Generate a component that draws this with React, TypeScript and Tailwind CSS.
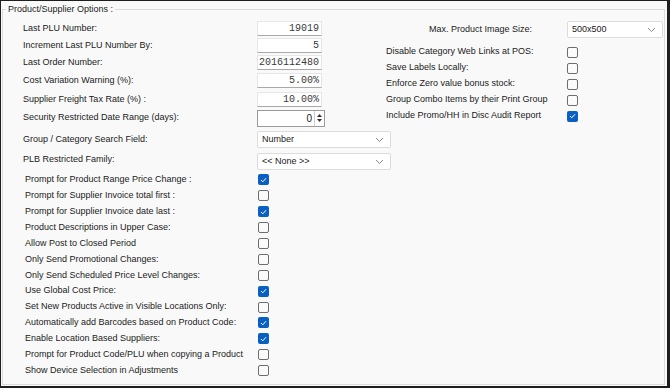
import React from 'react';

const font = "font-['Liberation_Sans',Arial,sans-serif]";

function Chevron() {
  return (
    <svg width="9" height="6" viewBox="0 0 9 6" className="shrink-0">
      <polyline points="1,1 4.5,4.5 8,1" fill="none" stroke="#8a8a8a" strokeWidth="1" />
    </svg>
  );
}

function Check({ checked }: { checked?: boolean }) {
  if (checked) {
    return (
      <div className="w-[11px] h-[11px] rounded-[2px] bg-[#0a5fc2] flex items-center justify-center">
        <svg width="7" height="6" viewBox="0 0 7 6">
          <polyline points="1,3 2.8,4.8 6,1.2" fill="none" stroke="#ffffff" strokeWidth="1" />
        </svg>
      </div>
    );
  }
  return <div className="w-[11px] h-[11px] rounded-[2px] border border-[#6e6e6e] bg-[#fbfbfb]" />;
}

function NumInput({ value }: { value: string }) {
  return (
    <div className="w-[65px] h-[15px] bg-white border border-[#e6e6e6] border-b-[#a9a9a9] flex items-center justify-end pr-[2px] font-['Liberation_Mono',monospace] text-[10px] text-[#3a3a3a]">
      {value}
    </div>
  );
}

function Select({ value, w }: { value: string; w: string }) {
  return (
    <div className={`${w} h-[17px] bg-white border border-[#dcdcdc] rounded-[2px] flex items-center justify-between pl-[4px] pr-[6px] text-[9px] text-[#1a1a1a] whitespace-nowrap`}>
      <span>{value}</span>
      <Chevron />
    </div>
  );
}

const topRows = [
  { label: 'Last PLU Number:', value: '19019', cls: 'h-[17px]' },
  { label: 'Increment Last PLU Number By:', value: '5', cls: 'h-[17px]' },
  { label: 'Last Order Number:', value: '2016112480', cls: 'h-[17px]' },
  { label: 'Cost Variation Warning (%):', value: '5.00%', cls: 'h-[17px] mt-[1px]' },
  { label: 'Supplier Freight Tax Rate (%) :', value: '10.00%', cls: 'h-[17px] mt-[2px]' },
];

const rightChecks = [
  { label: 'Disable Category Web Links at POS:', checked: false },
  { label: 'Save Labels Locally:', checked: false },
  { label: 'Enforce Zero value bonus stock:', checked: false },
  { label: 'Group Combo Items by their Print Group', checked: false },
  { label: 'Include Promo/HH in Disc Audit Report', checked: true },
];

const leftChecks = [
  { label: 'Prompt for Product Range Price Change :', checked: true },
  { label: 'Prompt for Supplier Invoice total first :', checked: false },
  { label: 'Prompt for Supplier Invoice date last :', checked: true },
  { label: 'Product Descriptions in Upper Case:', checked: false },
  { label: 'Allow Post to Closed Period', checked: false },
  { label: 'Only Send Promotional Changes:', checked: false },
  { label: 'Only Send Scheduled Price Level Changes:', checked: false },
  { label: 'Use Global Cost Price:', checked: true },
  { label: 'Set New Products Active in Visible Locations Only:', checked: false },
  { label: 'Automatically add Barcodes based on Product Code:', checked: true },
  { label: 'Enable Location Based Suppliers:', checked: true },
  { label: 'Prompt for Product Code/PLU when copying a Product', checked: false },
  { label: 'Show Device Selection in Adjustments', checked: false },
];

export default function App() {
  return (
    <div className={`w-[670px] h-[388px] bg-[#f9f9f9] border-l border-t border-r-[3px] border-b-[2px] border-[#1e1e1e] ${font} text-[9px] text-[#1a1a1a] whitespace-nowrap overflow-hidden`}>
      <div className="relative ml-[1px] mt-[8px] w-[663px] h-[376px] border border-[#dcdcdc]">
        {/* group box title sits on the border */}
        <span className="absolute left-[3px] top-[-7px] px-[2px] bg-[#f9f9f9] leading-[12px]">
          Product/Supplier Options :
        </span>

        <div className="pt-[10px] pl-[20px] flex flex-col">
          {/* Top section: numeric fields + right options */}
          <div className="flex">
            <div className="w-[305px] flex flex-col">
              {topRows.map((r) => (
                <div key={r.label} className={`${r.cls} flex items-center`}>
                  <span className="w-[234px]">{r.label}</span>
                  <NumInput value={r.value} />
                </div>
              ))}
              <div className="h-[18px] mt-[1px] flex items-center">
                <span className="w-[234px]">Security Restricted Date Range (days):</span>
                <div className="w-[68px] h-[17px] bg-white border border-[#9a9a9a] flex items-center">
                  <span className="flex-1 text-right pr-[2px] text-[10px]">0</span>
                  <div className="w-[10px] h-full border-l border-[#d0d0d0] flex flex-col items-center justify-center gap-[2px]">
                    <svg width="5" height="3" viewBox="0 0 5 3"><polygon points="0,3 2.5,0 5,3" fill="#333" /></svg>
                    <svg width="5" height="3" viewBox="0 0 5 3"><polygon points="0,0 5,0 2.5,3" fill="#333" /></svg>
                  </div>
                </div>
              </div>
            </div>

            <div className="ml-[58px] w-[277px] flex flex-col">
              <div className="h-[17px] mt-[1px] flex items-center">
                <span className="w-[146px] text-right">Max. Product Image Size:</span>
                <div className="ml-[35px]">
                  <Select value="500x500" w="w-[96px]" />
                </div>
              </div>
              <div className="mt-[6px] flex flex-col">
                {rightChecks.map((c) => (
                  <div key={c.label} className="h-[16px] flex items-center">
                    <span className="w-[181px]">{c.label}</span>
                    <Check checked={c.checked} />
                  </div>
                ))}
              </div>
            </div>
          </div>

          {/* Dropdown fields */}
          <div className="mt-[4px] h-[17px] flex items-center">
            <span className="w-[234px]">Group / Category Search Field:</span>
            <Select value="Number" w="w-[134px]" />
          </div>
          <div className="mt-[5px] h-[17px] flex items-center">
            <span className="w-[234px] -mt-[3px]">PLB Restricted Family:</span>
            <Select value="<< None >>" w="w-[134px]" />
          </div>

          {/* Checkbox options */}
          <div className="mt-[2px] pl-[2px] flex flex-col">
            {leftChecks.map((c) => (
              <div key={c.label} className="h-[15.9px] flex items-center">
                <span className="w-[233px]">{c.label}</span>
                <Check checked={c.checked} />
              </div>
            ))}
          </div>
        </div>
      </div>
    </div>
  );
}
